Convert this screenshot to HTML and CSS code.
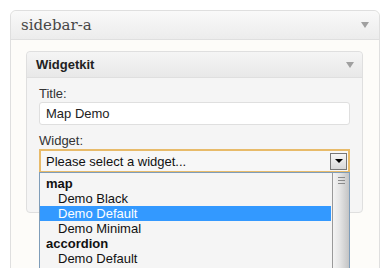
FILE: index.html
```html
<!DOCTYPE html>
<html>
<head>
    <title>sidebar-a</title>
    <link rel="stylesheet" href="styles.css">
</head>
<body>
    <div class="frame">
        <div class="sidebar">
            <div class="sidebar-head">
                <h3>sidebar-a</h3>
                <span class="toggle"></span>
            </div>
            <div class="sidebar-body">
                <div class="widget">
                    <div class="widget-head">
                        <h4>Widgetkit</h4>
                        <span class="toggle"></span>
                    </div>
                    <div class="widget-body">
                        <label class="field-label">Title:</label>
                        <div class="text-input">Map Demo</div>
                        <label class="field-label">Widget:</label>
                        <div class="select-wrap">
                            <div class="select">
                                <span>Please select a widget...</span>
                                <span class="select-button"></span>
                            </div>
                            <div class="select-list">
                                <div class="options">
                                    <div class="group">map</div>
                                    <div class="option">Demo Black</div>
                                    <div class="option selected">Demo Default</div>
                                    <div class="option">Demo Minimal</div>
                                    <div class="group">accordion</div>
                                    <div class="option">Demo Default</div>
                                </div>
                                <div class="scrollbar">
                                    <div class="thumb"><span class="grip"></span></div>
                                </div>
                            </div>
                        </div>
                    </div>
                </div>
            </div>
        </div>
    </div>
</body>
</html>
```

FILE: styles.css
```css
body {
    margin: 0;
    background-color: #ffffff;
    font-family: "Liberation Sans", Arial, sans-serif;
}

.frame {
    height: 258px;
    padding: 10px 10px 0 10px;
    overflow: hidden;
}

.sidebar {
    width: 368px;
    height: 300px;
    border: 1px solid #dfdfdf;
    border-radius: 6px 6px 0 0;
    background-color: #fdfcf9;
}

.sidebar-head {
    display: flex;
    justify-content: space-between;
    align-items: center;
    height: 28px;
    padding: 0 10px 0 10px;
    border-bottom: 1px solid #dfdfdf;
    border-radius: 6px 6px 0 0;
    background: linear-gradient(#f9f9f9, #ececec);
}

.sidebar-head h3 {
    margin: 0;
    font-family: "DejaVu Serif", Georgia, serif;
    font-weight: normal;
    font-size: 15px;
    color: #464646;
}

.toggle {
    width: 0;
    height: 0;
    border-left: 4px solid transparent;
    border-right: 4px solid transparent;
    border-top: 6px solid #a0a0a0;
}

.sidebar-body {
    padding: 11px 16px 0 15px;
}

.widget {
    border: 1px solid #dfdfdf;
    border-radius: 4px;
    background-color: #f5f5f5;
}

.widget-head {
    display: flex;
    justify-content: space-between;
    align-items: center;
    height: 25px;
    padding: 0 8px 0 9px;
    border-bottom: 1px solid #dfdfdf;
    border-radius: 4px 4px 0 0;
    background: linear-gradient(#f5f5f5, #e8e8e8);
}

.widget-head h4 {
    margin: 0;
    font-size: 13px;
    font-weight: bold;
    color: #222222;
}

.widget-body {
    padding: 8px 12px 40px 12px;
}

.field-label {
    display: block;
    height: 16px;
    font-size: 13px;
    line-height: 16px;
    color: #333333;
}

.text-input {
    height: 21px;
    margin-bottom: 8px;
    padding: 0 6px;
    border: 1px solid #dfdfdf;
    border-radius: 3px;
    background-color: #ffffff;
    font-size: 13px;
    line-height: 21px;
    color: #222222;
}

.select-wrap {
    position: relative;
}

.select {
    display: flex;
    justify-content: space-between;
    align-items: center;
    height: 20px;
    padding: 0 1px 0 5px;
    border: 2px solid #e8bb6a;
    border-bottom-width: 1px;
    background-color: #f7f7f7;
    font-size: 13px;
    color: #111111;
}

.select-button {
    display: flex;
    justify-content: center;
    align-items: center;
    width: 15px;
    height: 15px;
    border: 1px solid #777777;
    background: linear-gradient(#f6f6f6, #d8d8d8);
}

.select-button::after {
    content: "";
    width: 0;
    height: 0;
    border-left: 4px solid transparent;
    border-right: 4px solid transparent;
    border-top: 4px solid #000000;
}

.select-list {
    position: absolute;
    top: 23px;
    left: 0;
    right: 0;
    height: 120px;
    display: flex;
    border: 1px solid #7f9db9;
    background-color: #f5f5f5;
}

.options {
    flex: 1;
    padding-top: 3px;
    font-size: 13px;
    color: #111111;
}

.group,
.option {
    height: 15px;
    line-height: 15px;
}

.group {
    padding-left: 6px;
    font-weight: bold;
}

.option {
    padding-left: 18px;
}

.option.selected {
    margin-right: 1px;
    background-color: #3399ff;
    color: #ffffff;
}

.scrollbar {
    width: 16px;
    border-left: 1px solid #999999;
}

.thumb {
    height: 100%;
    display: flex;
    justify-content: center;
    padding-top: 4px;
    box-sizing: border-box;
    background: linear-gradient(to right, #f4f4f4, #e6e6e6 40%, #c4c4c4);
}

.grip {
    width: 7px;
    height: 5px;
    border-top: 1px solid #8a8a8a;
    border-bottom: 1px solid #8a8a8a;
    background: linear-gradient(transparent 2px, #8a8a8a 2px, #8a8a8a 3px, transparent 3px);
}
```
